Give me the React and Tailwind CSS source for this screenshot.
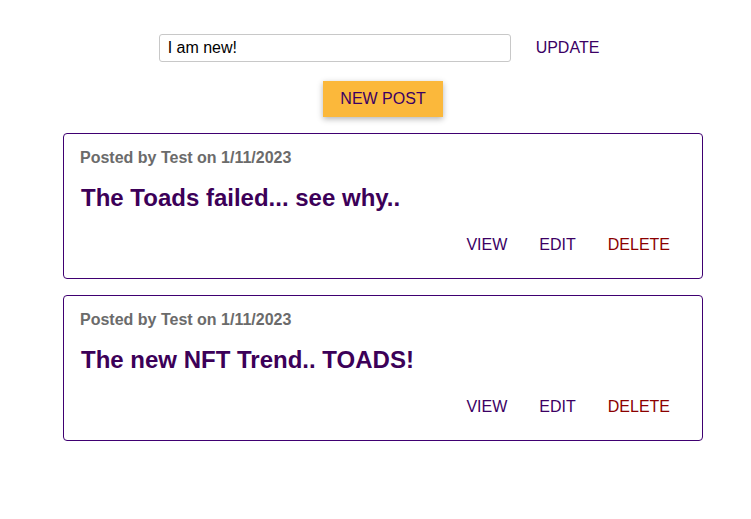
export default function App() {
  const posts = [
    { title: "The Toads failed... see why.." },
    { title: "The new NFT Trend.. TOADS!" },
  ];
  return (
    <div className="min-h-[519px] bg-white pl-[15px] pt-[30px]" style={{ fontFamily: '"Liberation Sans", Arial, sans-serif' }}>
      <div className="flex flex-col items-center">
        <div className="flex items-center gap-[17px]">
          <input
            defaultValue="I am new!"
            className="h-[28px] w-[352px] rounded-[3px] border border-[#c8c8c8] px-[8px] text-[16px] text-black outline-none"
            style={{ fontFamily: '"Liberation Sans", Arial, sans-serif' }}
          />
          <button className="h-9 px-2 text-[16px] text-[#3b0064]">UPDATE</button>
        </div>
        <button className="mt-[15px] h-9 w-[120px] bg-[#fbb83b] text-[16px] text-[#3b0064] shadow-[0_2px_6px_rgba(0,0,0,0.3)]">
          NEW POST
        </button>
        <div className="mt-[16px] flex w-[640px] flex-col gap-[16px]">
          {posts.map((p, i) => (
            <div key={i} className="rounded-[4px] border border-[#3f0071] px-4 pt-[15px] pb-[15px]">
              <div className="text-[16px] leading-[18px] font-bold text-[#6b6b6b]">Posted by Test on 1/11/2023</div>
              <div className="mt-[17px] text-[24px] leading-[28px] font-bold text-[#3c0058] pl-[1px]">{p.title}</div>
              <div className="mt-[15px] flex justify-end gap-[16px] pr-[8px]">
                <button className="h-9 px-2 text-[16px] text-[#3b0064]">VIEW</button>
                <button className="h-9 px-2 text-[16px] text-[#3b0064]">EDIT</button>
                <button className="h-9 px-2 text-[16px] text-[#8b0000]">DELETE</button>
              </div>
            </div>
          ))}
        </div>
      </div>
    </div>
  );
}
